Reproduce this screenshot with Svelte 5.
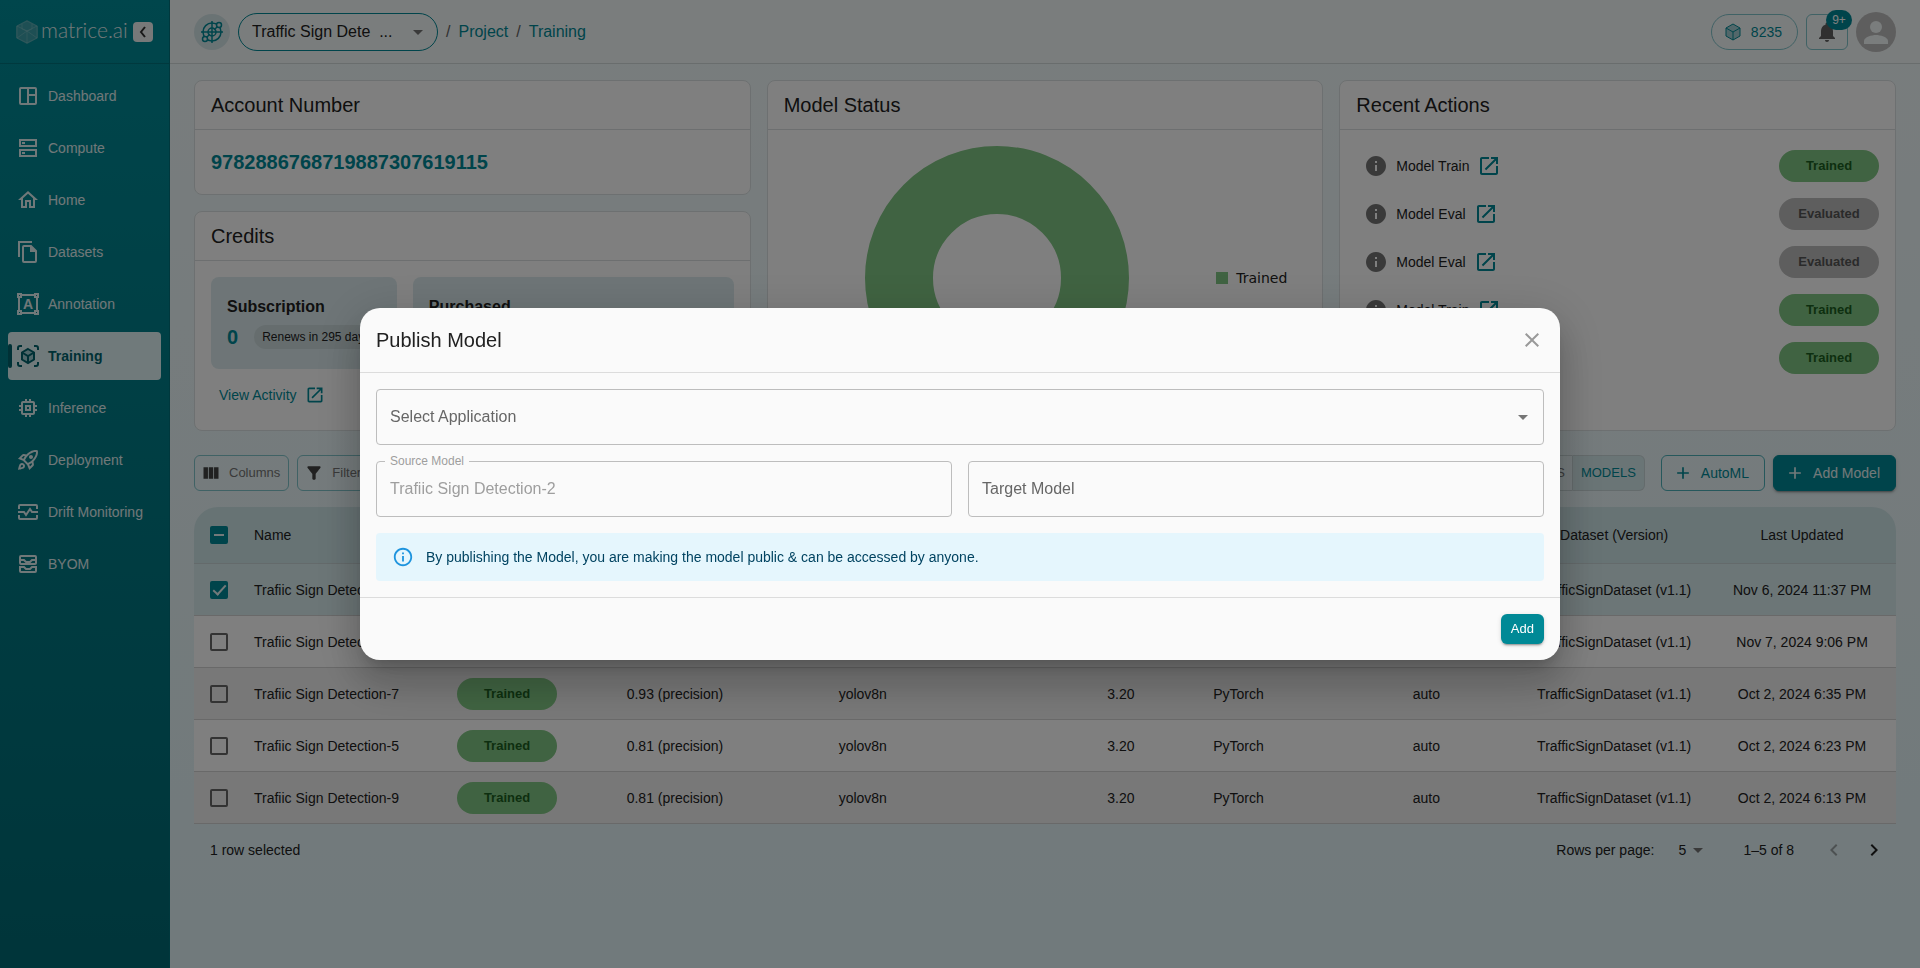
<script>
  const nav = [
    { label: 'Dashboard', icon: 'dashboard' },
    { label: 'Compute', icon: 'compute' },
    { label: 'Home', icon: 'home' },
    { label: 'Datasets', icon: 'datasets' },
    { label: 'Annotation', icon: 'annotation' },
    { label: 'Training', icon: 'training', active: true },
    { label: 'Inference', icon: 'inference' },
    { label: 'Deployment', icon: 'deployment' },
    { label: 'Drift Monitoring', icon: 'drift' },
    { label: 'BYOM', icon: 'byom' }
  ];

  const actions = [
    { name: 'Model Train', status: 'Trained' },
    { name: 'Model Eval', status: 'Evaluated' },
    { name: 'Model Eval', status: 'Evaluated' },
    { name: 'Model Train', status: 'Trained' },
    { name: 'Model Train', status: 'Trained' }
  ];

  let rows = $state([
    { name: 'Trafiic Sign Detection-2', score: '0.95', updated: 'Nov 6, 2024 11:37 PM', selected: true },
    { name: 'Trafiic Sign Detection-8', score: '0.94', updated: 'Nov 7, 2024 9:06 PM', selected: false },
    { name: 'Trafiic Sign Detection-7', score: '0.93', updated: 'Oct 2, 2024 6:35 PM', selected: false },
    { name: 'Trafiic Sign Detection-5', score: '0.81', updated: 'Oct 2, 2024 6:23 PM', selected: false },
    { name: 'Trafiic Sign Detection-9', score: '0.81', updated: 'Oct 2, 2024 6:13 PM', selected: false }
  ]);

  let count = $derived(rows.filter((r) => r.selected).length);
  let some = $state(true);
</script>

{#snippet openIcon()}
  <svg viewBox="0 0 24 24" class="fill" aria-hidden="true"><path d="M19 19H5V5h7V3H5c-1.11 0-2 .9-2 2v14c0 1.1.89 2 2 2h14c1.1 0 2-.9 2-2v-7h-2v7zM14 3v2h3.59l-9.83 9.83 1.41 1.41L19 6.41V10h2V3h-7z" /></svg>
{/snippet}

{#snippet plusIcon()}
  <svg viewBox="0 0 24 24" class="fill" aria-hidden="true"><path d="M19 13h-6v6h-2v-6H5v-2h6V5h2v6h6v2z" /></svg>
{/snippet}

{#snippet navIcon(name)}
  <svg viewBox="0 0 24 24" class="line" aria-hidden="true">
    {#if name === 'dashboard'}
      <rect x="4" y="4" width="16" height="16" rx="1" />
      <path d="M12 4v16M12 11h8" />
    {:else if name === 'compute'}
      <rect x="4" y="4" width="16" height="6" />
      <rect x="4" y="14" width="16" height="6" />
      <path d="M6 7h3M6 17h3" />
    {:else if name === 'home'}
      <path class="solid" d="m12 5.69 5 4.5V18h-2v-6H9v6H7v-7.81l5-4.5M12 3 2 12h3v8h6v-6h2v6h6v-8h3L12 3z" />
    {:else if name === 'datasets'}
      <path d="M3 17V2h13" />
      <path d="M7 7a1 1 0 0 1 1-1h7l5 5v10a1 1 0 0 1-1 1H8a1 1 0 0 1-1-1z" />
      <path class="solid" d="M14 5l7 7h-7z" />
    {:else if name === 'annotation'}
      <path d="M6 3h12M6 21h12M3 6v12M21 6v12" />
      <path d="M2 2h3v3H2zM19 2h3v3h-3zM2 19h3v3H2zM19 19h3v3h-3z" />
      <text x="12" y="17" text-anchor="middle">A</text>
    {:else if name === 'training'}
      <path d="M2 6V4a2 2 0 0 1 2-2h2M18 2h2a2 2 0 0 1 2 2v2M22 18v2a2 2 0 0 1-2 2h-2M6 22H4a2 2 0 0 1-2-2v-2" />
      <path class="tint" d="M12 5l6 3.500v7L12 19l-6-3.500v-7z" />
      <path d="M6 8.500l6 3.500 6-3.500M12 12v7" />
    {:else if name === 'inference'}
      <path class="solid" d="M15 9H9v6h6V9zm-2 4h-2v-2h2v2zm8-2V9h-2V7c0-1.1-.9-2-2-2h-2V3h-2v2h-2V3H9v2H7c-1.1 0-2 .9-2 2v2H3v2h2v2H3v2h2v2c0 1.1.9 2 2 2h2v2h2v-2h2v2h2v-2h2c1.100 0 2-.9 2-2v-2h2v-2h-2v-2h2zm-4 6H7V7h10v10z" />
    {:else if name === 'deployment'}
      <path class="solid" d="M6 15c-.83 0-1.58.34-2.12.88C2.7 17.06 2 22 2 22s4.94-.7 6.12-1.880c.54-.54.88-1.290.88-2.120 0-1.660-1.340-3-3-3zm.71 3.710c-.28.28-2.170.76-2.170.76s.47-1.880.76-2.170c.17-.19.42-.3.7-.3.55 0 1 .45 1 1 0 .28-.11.53-.29.71zm10.710-5.060c6.360-6.360 4.240-11.310 4.240-11.310S16.710.22 10.350 6.580l-2.490-.5c-.65-.13-1.330.08-1.810.55L2 10.690l5 2.140L11.170 17l2.140 5 4.050-4.050c.47-.47.68-1.150.55-1.810l-.49-2.490zM7.410 10.830l-1.910-.82 1.970-1.970 1.440.29c-.57.83-1.080 1.700-1.500 2.500zm6.580 7.670-.82-1.910c.8-.42 1.670-.93 2.490-1.500l.29 1.440-1.960 1.970zM16 12.240c-1.320 1.320-3.380 2.400-4.040 2.730l-2.930-2.930c.32-.65 1.400-2.710 2.730-4.040 4.680-4.680 8.230-3.990 8.230-3.990s.69 3.550-3.990 8.230zM15 11c1.100 0 2-.9 2-2s-.9-2-2-2-2 .9-2 2 .9 2 2 2z" />
    {:else if name === 'drift'}
      <path d="M3 9V6a1 1 0 0 1 1-1h16a1 1 0 0 1 1 1v3M3 15v3a1 1 0 0 0 1 1h16a1 1 0 0 0 1-1v-3" />
      <path d="M2 12h6l2 3 4-6 2 3h6" />
    {:else}
      <rect x="4" y="4" width="16" height="8" rx="1" />
      <path d="M4 8h4l2 2h4l2-2h4" />
      <path d="M4 15h4l2 2h4l2-2h4v4a1 1 0 0 1-1 1H5a1 1 0 0 1-1-1z" />
    {/if}
  </svg>
{/snippet}

<div class="app">
  <aside>
    <div class="brand">
      <svg class="mark" viewBox="0 0 22 24" aria-hidden="true">
        <path d="M11 0l11 6v12l-11 6L0 18V6z" class="m1" />
        <path d="M11 1l10 5v12l-10 5L1 18V6zM1 6l10 5 10-5M11 11v12M1 18l10-7 10 7M6 4v5l5 2 5-2V4" class="m2" />
      </svg>
      <span class="word">matrice.ai</span>
      <button class="collapse" aria-label="Collapse sidebar">
        <svg viewBox="0 0 20 20" aria-hidden="true"><path d="M12 5l-4 5 4 5" /></svg>
      </button>
    </div>
    <nav>
      {#each nav as item}
        <a href="#{item.icon}" class:active={item.active}>{@render navIcon(item.icon)}<span>{item.label}</span></a>
      {/each}
    </nav>
  </aside>

  <div class="page">
    <header>
      <div class="project">
        <svg viewBox="0 0 24 24" aria-hidden="true">
          <circle cx="12" cy="12" r="9" /><circle cx="12" cy="12" r="4" />
          <path d="M12 1v22M1 12h22M14 10l4-4M10 14l-4 4" />
          <circle class="dot" cx="19" cy="5" r="2.500" /><circle class="dot" cx="5" cy="19" r="2.500" />
        </svg>
      </div>
      <div class="pill">
        <select aria-label="Project"><option>Traffic Sign Dete &nbsp;...</option></select>
        <svg viewBox="0 0 24 24" class="fill caret" aria-hidden="true"><path d="m7 10 5 5 5-5z" /></svg>
      </div>
      <div class="crumbs">
        <span>/</span><a href="#project">Project</a><span>/</span><a href="#training">Training</a>
      </div>
      <div class="tools">
        <button class="balance">
          <svg viewBox="0 0 20 20" aria-hidden="true"><path class="tint" d="M10 2l7 4v8l-7 4-7-4V6z" /><path d="M3 6l7 4 7-4M10 10v8" /></svg>
          8235
        </button>
        <button class="bell" aria-label="Notifications">
          <svg viewBox="0 0 24 24" class="fill" aria-hidden="true"><path d="M12 22c1.100 0 2-.9 2-2h-4c0 1.100.89 2 2 2zm6-6v-5c0-3.070-1.640-5.640-4.500-6.320V4c0-.83-.67-1.500-1.500-1.500s-1.500.67-1.500 1.500v.68C7.630 5.360 6 7.920 6 11v5l-2 2v1h16v-1l-2-2z" /></svg>
          <span class="badge">9+</span>
        </button>
        <button class="avatar" aria-label="Account">
          <svg viewBox="0 0 40 40" aria-hidden="true"><circle cx="20" cy="15" r="6" /><path d="M8 32v-3c0-4 8-6 12-6s12 2 12 6v3z" /></svg>
        </button>
      </div>
    </header>

    <main>
      <div class="cards">
        <div class="stack">
          <section class="card">
            <h2>Account Number</h2>
            <p class="account">9782886768719887307619115</p>
          </section>
          <section class="card grow">
            <h2>Credits</h2>
            <div class="credits">
              <div class="boxes">
                <div class="box">
                  <h3>Subscription</h3>
                  <div class="amount"><b>0</b><span class="renew">Renews in 295 days</span></div>
                </div>
                <div class="box">
                  <h3>Purchased</h3>
                </div>
              </div>
              <a class="activity" href="#activity">View Activity {@render openIcon()}</a>
            </div>
          </section>
        </div>

        <section class="card">
          <h2>Model Status</h2>
          <div class="chart">
            <svg viewBox="0 0 264 264" role="img" aria-label="Trained models"><circle cx="132" cy="132" r="98" /></svg>
            <div class="legend"><i></i>Trained</div>
          </div>
        </section>

        <section class="card">
          <h2>Recent Actions</h2>
          <ul>
            {#each actions as a}
              <li>
                <svg viewBox="0 0 24 24" class="fill info" aria-hidden="true"><path d="M12 2C6.480 2 2 6.480 2 12s4.480 10 10 10 10-4.480 10-10S17.520 2 12 2zm1 15h-2v-6h2v6zm0-8h-2V7h2v2z" /></svg>
                <span>{a.name}</span>
                <a href="#action" aria-label="Open {a.name}">{@render openIcon()}</a>
                <span class="chip" class:grey={a.status === 'Evaluated'}>{a.status}</span>
              </li>
            {/each}
          </ul>
        </section>
      </div>

      <div class="toolbar">
        <button class="ghost"><svg viewBox="0 0 24 24" class="fill" aria-hidden="true"><path d="M14.670 5v14H9.330V5h5.340zm1 14H21V5h-5.330v14zm-7.340 0V5H3v14h5.330z" /></svg>Columns</button>
        <button class="ghost"><svg viewBox="0 0 24 24" class="fill" aria-hidden="true"><path d="M4.250 5.610C6.270 8.200 10 13 10 13v6c0 .55.45 1 1 1h2c.55 0 1-.45 1-1v-6s3.720-4.800 5.740-7.390c.51-.66.04-1.610-.79-1.610H5.040c-.83 0-1.300.95-.79 1.610z" /></svg>Filters</button>
        <div class="toggle">
          <button>EXPERIMENTS</button><button class="on">MODELS</button>
        </div>
        <button class="action">{@render plusIcon()}AutoML</button>
        <button class="action primary">{@render plusIcon()}Add Model</button>
      </div>

      <div class="grid">
        <table>
          <colgroup><col class="c-check" /><col class="c-name" /><col class="c-status" /><col /><col /><col /><col /><col /><col /><col /></colgroup>
          <thead>
            <tr>
              <th><input type="checkbox" aria-label="Select all rows" bind:indeterminate={some} /></th>
              <th class="left">Name</th><th>Status</th><th>Performance</th><th>Architecture</th><th class="right">Size</th>
              <th>Framework</th><th>Tuning</th><th>Dataset (Version)</th><th>Last Updated</th>
            </tr>
          </thead>
          <tbody>
            {#each rows as r}
              <tr class:selected={r.selected}>
                <td><input type="checkbox" aria-label="Select {r.name}" bind:checked={r.selected} /></td>
                <td class="left">{r.name}</td>
                <td><span class="chip">Trained</span></td>
                <td>{r.score} (precision)</td>
                <td>yolov8n</td>
                <td class="right">3.20</td>
                <td>PyTorch</td>
                <td>auto</td>
                <td>TrafficSignDataset (v1.1)</td>
                <td>{r.updated}</td>
              </tr>
            {/each}
          </tbody>
        </table>
        <div class="foot">
          <span class="count">{count} row selected</span>
          <label for="per-page">Rows per page:</label>
          <div class="per">
            <select id="per-page"><option>5</option></select>
            <svg viewBox="0 0 24 24" class="fill caret" aria-hidden="true"><path d="m7 10 5 5 5-5z" /></svg>
          </div>
          <span class="range">1–5 of 8</span>
          <button aria-label="Previous page" disabled><svg viewBox="0 0 24 24" class="fill" aria-hidden="true"><path d="M15.410 16.590 10.830 12l4.580-4.590L14 6l-6 6 6 6z" /></svg></button>
          <button aria-label="Next page"><svg viewBox="0 0 24 24" class="fill" aria-hidden="true"><path d="M8.590 16.590 13.170 12 8.590 7.410 10 6l6 6-6 6z" /></svg></button>
        </div>
      </div>
    </main>
  </div>
</div>

<div class="backdrop">
  <div class="modal" role="dialog" aria-labelledby="dlg-title">
    <div class="m-head">
      <h2 id="dlg-title">Publish Model</h2>
      <button aria-label="Close"><svg viewBox="0 0 24 24" class="fill" aria-hidden="true"><path d="M19 6.410 17.590 5 12 10.590 6.410 5 5 6.410 10.590 12 5 17.590 6.410 19 12 13.410 17.590 19 19 17.590 13.410 12z" /></svg></button>
    </div>
    <div class="m-body">
      <div class="field full">
        <label for="app-select">Select Application</label>
        <select id="app-select"><option value=""></option></select>
        <svg viewBox="0 0 24 24" class="fill caret" aria-hidden="true"><path d="m7 10 5 5 5-5z" /></svg>
      </div>
      <div class="field float">
        <label for="source">Source Model</label>
        <input id="source" type="text" value="Trafiic Sign Detection-2" disabled />
      </div>
      <div class="field">
        <label for="target">Target Model</label>
        <input id="target" type="text" />
      </div>
      <div class="alert full">
        <svg viewBox="0 0 24 24" class="fill" aria-hidden="true"><path d="M11 7h2v2h-2V7zm0 4h2v6h-2v-6zm1-9C6.480 2 2 6.480 2 12s4.480 10 10 10 10-4.480 10-10S17.520 2 12 2zm0 18c-4.410 0-8-3.590-8-8s3.590-8 8-8 8 3.590 8 8-3.590 8-8 8z" /></svg>
        By publishing the Model, you are making the model public &amp; can be accessed by anyone.
      </div>
    </div>
    <div class="m-foot"><button>Add</button></div>
  </div>
</div>

<style>
  :global(body) { margin: 0; background: #f2fafb; }
  * { box-sizing: border-box; }
  .app, .backdrop { font-family: "Liberation Sans", Arial, sans-serif; font-size: 14px; line-height: 20px; color: #212121; }
  button, select, input { font: inherit; color: inherit; margin: 0; }
  button { display: flex; align-items: center; justify-content: center; border: 0; background: none; padding: 0; white-space: nowrap; }
  select { appearance: none; border: 0; background: transparent; outline: 0; }
  h2, h3, p, ul { margin: 0; padding: 0; font-weight: 400; }
  a { color: #008996; text-decoration: none; }
  svg { display: block; width: 24px; height: 24px; flex: none; }
  .fill { fill: currentColor; }
  .line { fill: none; stroke: currentColor; stroke-width: 2; }
  .line .solid { fill: currentColor; stroke: none; }
  .line text { fill: currentColor; stroke: none; font-size: 14px; font-weight: 700; }

  .app { display: flex; min-height: 100vh; background: linear-gradient(#f2fafb, #e2f4f8); }
  aside { width: 170px; flex: none; background: linear-gradient(#008c98, #006a74); border-right: 1px solid #00707a; color: #e0f0f2; }
  .brand { display: flex; align-items: center; height: 64px; padding: 0 16px; border-bottom: 1px solid #00727c; }
  .mark { width: 22px; height: 24px; fill: none; }
  .m1 { fill: #3d9fa8; }
  .m2 { stroke: #7fc0c6; stroke-width: 1; opacity: 0.5; }
  .word { font-family: Lato, sans-serif; font-weight: 300; font-size: 21px; line-height: 24px; padding: 0 0 4px 3px; flex: 1; color: #e6f2f3; }
  .collapse { width: 20px; height: 20px; border-radius: 4px; background: #eef2f2; color: #333; flex: none; }
  .collapse svg { width: 20px; height: 20px; fill: none; stroke: currentColor; stroke-width: 2; }
  nav { display: flex; flex-direction: column; gap: 4px; padding: 8px; }
  nav a { display: flex; align-items: center; gap: 8px; height: 48px; padding-left: 8px; border-radius: 4px; color: #e0f0f2; position: relative; white-space: nowrap; }
  nav a.active { background: #e0f4f6; color: #00636c; font-weight: 700; }
  nav a.active::before { content: ""; position: absolute; left: 0; top: 12px; width: 4px; height: 24px; border-radius: 2px; background: #00636c; }
  nav svg { width: 24px; height: 24px; }
  .tint { fill: #9fcdd3; }

  .page { flex: 1; min-width: 0; }
  header { display: flex; align-items: center; gap: 8px; height: 64px; padding: 0 24px; background: #f5fafa; border-bottom: 1px solid #d2dadb; }
  .project { display: grid; place-items: center; width: 36px; height: 36px; border-radius: 50%; background: #d5e6e9; }
  .project svg { width: 24px; height: 24px; fill: none; stroke: #008996; stroke-width: 1.5; }
  .project .dot { fill: #d5e6e9; }
  .pill { position: relative; width: 200px; }
  .pill select { display: block; width: 100%; height: 38px; padding: 0 40px 0 13px; border: 1px solid #008996; border-radius: 19px; font-size: 16px; }
  .caret { position: absolute; right: 8px; top: 50%; margin-top: -12px; pointer-events: none; color: #757575; }
  .crumbs { display: flex; gap: 8px; font-size: 16px; color: #616161; }
  .tools { display: flex; align-items: center; gap: 8px; margin-left: auto; }
  .balance { height: 36px; padding: 0 15px 0 11px; gap: 8px; border: 1px solid #80c4cb; border-radius: 18px; color: #008996; }
  .balance svg { width: 20px; height: 20px; fill: none; stroke: #008996; stroke-width: 1; }
  .balance svg .tint { fill: #a5cfd4; }
  .bell { position: relative; width: 42px; height: 36px; border: 1px solid #80c4cb; border-radius: 6px; color: #616161; }
  .badge { position: absolute; right: -5px; top: -5px; width: 26px; height: 20px; border-radius: 10px; background: #008996; color: #fff; font-size: 12px; }
  .avatar { width: 40px; height: 40px; border-radius: 50%; background: #bdbdbd; }
  .avatar svg { width: 40px; height: 40px; fill: #f5fafa; }

  main { padding: 16px 24px; }
  .cards { display: grid; grid-template-columns: repeat(3, minmax(0, 1fr)); gap: 16px; }
  .stack { display: flex; flex-direction: column; gap: 16px; }
  .card { background: #fff; border: 1px solid #dbe1e2; border-radius: 8px; }
  .card h2 { font-size: 20px; line-height: 32px; padding: 8px 16px; border-bottom: 1px solid #dbdfe0; }
  .grow { flex: 1; }
  .account { padding: 16px; font-size: 20px; line-height: 32px; font-weight: 700; color: #008996; }
  .credits { padding: 16px 16px 17px; }
  .boxes { display: grid; grid-template-columns: minmax(0, 186fr) minmax(0, 321fr); gap: 16px; }
  .box { overflow: hidden; padding: 20px 16px; border-radius: 8px; background: #dcebee; }
  .box h3 { font-size: 16px; font-weight: 700; }
  .amount { display: flex; align-items: center; gap: 16px; margin-top: 8px; height: 24px; color: #008996; font-size: 20px; }
  .renew { padding: 0 8px; border-radius: 12px; background: #ccdadc; color: #212121; font-size: 12px; line-height: 24px; white-space: nowrap; }
  .activity { display: inline-flex; align-items: center; gap: 8px; height: 36px; margin-top: 8px; padding: 0 8px; }
  .activity svg { width: 20px; height: 20px; }
  .chart { position: relative; display: flex; align-items: center; padding: 16px 35px 16px 97px; justify-content: space-between; }
  .chart svg { width: 264px; height: 264px; fill: none; stroke: #81c784; stroke-width: 68; }
  .legend { display: flex; align-items: center; gap: 8px; font-family: "DejaVu Sans", sans-serif; }
  .legend i { width: 12px; height: 12px; background: #81c784; }
  ul { list-style: none; padding: 12px 16px; }
  li { display: flex; align-items: center; gap: 8px; height: 48px; padding-left: 8px; }
  .info { color: #757575; }
  .chip { width: 100px; border-radius: 16px; background: #81c784; color: #1b5e20; font-size: 13px; font-weight: 700; line-height: 32px; text-align: center; display: block; }
  .chip.grey { background: #bdbdbd; color: #555; }
  li .chip { margin-left: auto; }

  .toolbar { display: flex; gap: 8px; padding: 24px 0 16px; }
  .toolbar button { height: 36px; }
  .toolbar svg { width: 20px; height: 20px; }
  .ghost { gap: 8px; padding: 0 8px 0 6px; border: 1px solid #80c4cb; border-radius: 6px; font-size: 13px; color: #757575; }
  .ghost svg { color: #424242; }
  .toggle { display: flex; margin-left: auto; margin-right: 8px; }
  .toggle button { padding: 0 7px; border: 1px solid #c9d6d8; border-radius: 6px 0 0 6px; font-size: 13px; color: #757575; }
  .toggle .on { border-left-width: 0; border-radius: 0 6px 6px 0; background: #d5eaec; color: #008996; padding: 0 8px; }
  .action { gap: 8px; padding: 0 15px 0 11px; border: 1px solid #4db0b9; border-radius: 6px; color: #008996; }
  .primary { background: #008996; border-color: #008996; color: #e6f3f4; box-shadow: 0 3px 1px -2px rgba(0,0,0,.2), 0 2px 2px rgba(0,0,0,.14), 0 1px 5px rgba(0,0,0,.12); }

  table { width: 100%; table-layout: fixed; border-collapse: separate; border-spacing: 0; }
  .c-check { width: 50px; }
  .c-name { width: 189px; }
  .c-status { width: 148px; }
  th, td { padding: 0 10px; height: 52px; border-bottom: 1px solid #d2d2d2; text-align: center; font-weight: 400; white-space: nowrap; overflow: hidden; }
  th { height: 57px; padding-bottom: 1px; background: #cfe6e9; border-color: #c9d4d6; }
  th:first-child { border-top-left-radius: 24px; }
  th:last-child { border-top-right-radius: 24px; }
  th:first-child, td:first-child { padding: 0 0 0 16px; }
  .left { text-align: left; }
  .right { text-align: right; }
  td { background: #fff; }
  tr:nth-child(odd) td { background: #f0f0f0; }
  tr.selected td { background: #d9ecee; }
  td .chip { margin-left: 14px; }
  input[type="checkbox"] { appearance: none; display: grid; place-items: center; width: 18px; height: 18px; border: 2px solid #666; border-radius: 2px; }
  input[type="checkbox"]:checked, input[type="checkbox"]:indeterminate { background: #008996; border-color: #008996; }
  input[type="checkbox"]:checked::after { content: ""; width: 5px; height: 11px; border: solid #e6f3f4; border-width: 0 2px 2px 0; transform: rotate(42deg); margin-top: -3px; }
  input[type="checkbox"]:indeterminate::after { content: ""; width: 10px; height: 2px; background: #e6f3f4; }
  .foot { display: flex; align-items: center; height: 52px; padding: 0 10px 0 16px; }
  .count { flex: 1; }
  .per { position: relative; width: 48px; margin: 0 17px 0 24px; }
  .per select { width: 100%; padding: 0; display: block; height: 24px; }
  .per .caret { right: 16px; }
  .range { margin-right: 28px; }
  .foot button { width: 24px; height: 24px; }
  .foot button:disabled { color: #9aa3a5; margin-right: 16px; }

  .backdrop { position: fixed; inset: 0; display: grid; place-items: center; background: rgba(0,0,0,.5); }
  .modal { width: calc(100% - 64px); max-width: 1200px; border-radius: 20px; background: #fafafa; box-shadow: 0 11px 15px -7px rgba(0,0,0,.2), 0 24px 38px 3px rgba(0,0,0,.14), 0 9px 46px 8px rgba(0,0,0,.12); }
  .m-head { display: flex; align-items: center; justify-content: space-between; padding: 16px; border-bottom: 1px solid #dcdcdc; }
  .m-head h2 { font-size: 20px; line-height: 32px; }
  .m-head button { color: #999; }
  .m-body { display: grid; grid-template-columns: 1fr 1fr; gap: 16px; padding: 16px; }
  .full { grid-column: 1 / -1; }
  .field { position: relative; height: 56px; color: #666; font-size: 16px; }
  .field input, .field select { display: block; width: 100%; height: 56px; padding: 0 13px; border: 1px solid #bdbdbd; border-radius: 4px; background: transparent; }
  .field label { position: absolute; left: 14px; top: 18px; pointer-events: none; }
  .field .caret { right: 9px; }
  .float, .float input { color: #9e9e9e; }
  .float label { left: 9px; top: -10px; padding: 0 5px; background: #fafafa; font-size: 12px; }
  .alert { display: flex; align-items: center; gap: 12px; height: 48px; padding: 0 16px; border-radius: 4px; background: #e5f6fd; color: #014361; }
  .alert svg { width: 22px; height: 22px; color: #1e94de; }
  .m-foot { display: flex; justify-content: flex-end; padding: 16px; border-top: 1px solid #dcdcdc; }
  .m-foot button { height: 30px; padding: 0 10px; border-radius: 6px; background: #008996; color: #fff; font-size: 13px; box-shadow: 0 3px 1px -2px rgba(0,0,0,.2), 0 2px 2px rgba(0,0,0,.14), 0 1px 5px rgba(0,0,0,.12); }
</style>
